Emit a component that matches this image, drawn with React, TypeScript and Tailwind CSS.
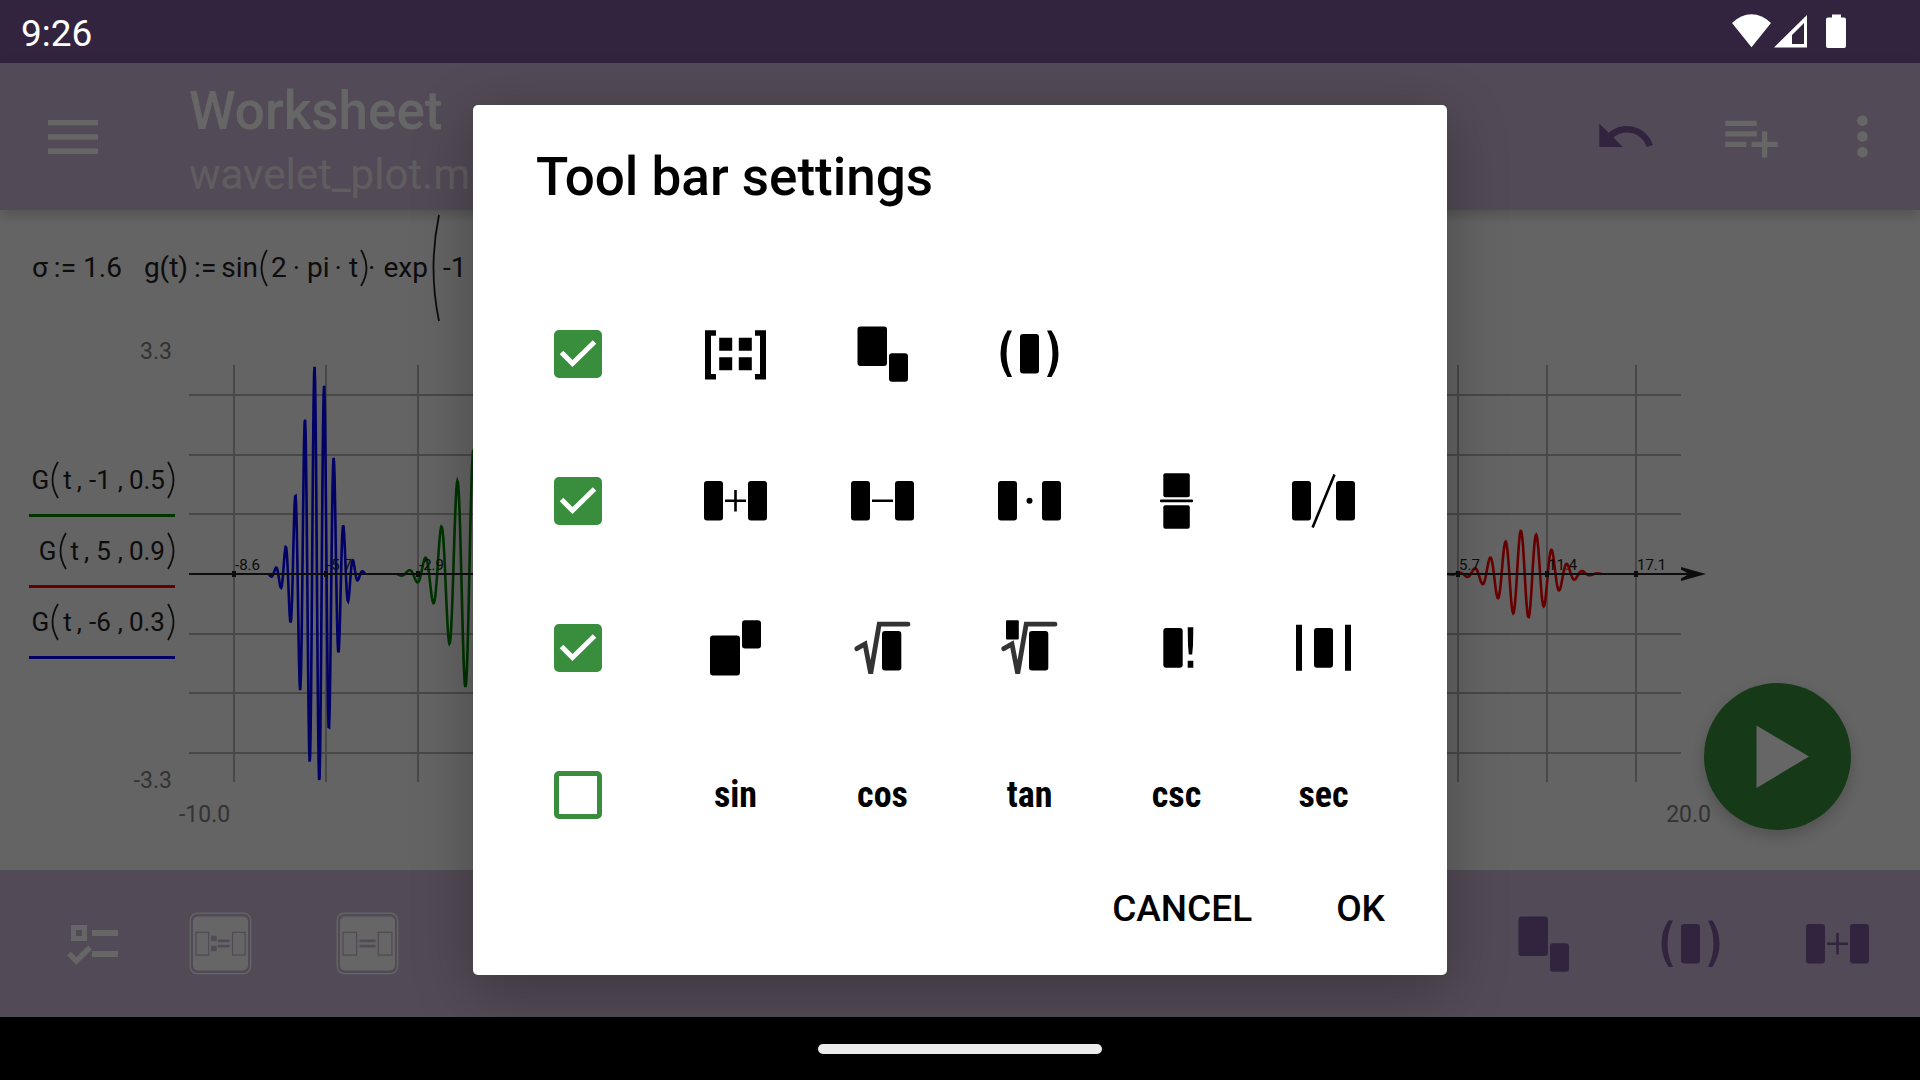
import { ReactNode, useState } from "react";

function Box({ x, y, w, h, r = 3 }: { x: number; y: number; w: number; h: number; r?: number }) {
  return <rect x={x} y={y} width={w} height={h} rx={r} />;
}

function Icon({ children }: { children: ReactNode }) {
  return (
    <svg className="size-[63px] shrink-0" viewBox="0 0 63 63" fill="currentColor" aria-hidden="true">
      {children}
    </svg>
  );
}

const Matrix = () => (
  <Icon>
    <path d="M1 8.2H12V13.7H7V52H12V57.5H1ZM62 8.2H51V13.7H56V52H51V57.5H62Z" />
    <path d="M15.2 15.8h13v13h-13zM34.8 15.8h13v13h-13zM15.2 35.2h13v13h-13zM34.8 35.2h13v13h-13z" />
  </Icon>
);

const Subscript = () => (
  <Icon>
    <Box x={6.5} y={4.5} w={29.5} h={39.5} />
    <Box x={38} y={31.3} w={19} h={28.4} />
  </Icon>
);

const Parens = () => (
  <Icon>
    <path d="M9.5 8.5H14Q8.5 19 8.5 31.7Q8.5 44 14 55H9.5Q2.5 44 2.5 31.7Q2.5 19 9.5 8.5Z" />
    <path d="M53.5 8.5H49Q54.5 19 54.5 31.7Q54.5 44 49 55H53.5Q60.5 44 60.5 31.7Q60.5 19 53.5 8.5Z" />
    <Box x={22} y={12} w={19} h={39.5} />
  </Icon>
);

const Pair = ({ children }: { children: ReactNode }) => (
  <Icon>
    <Box x={0} y={12} w={19} h={39.5} />
    <Box x={44} y={12} w={19} h={39.5} />
    {children}
  </Icon>
);

const Plus = () => (
  <Pair>
    <path d="M21 30.5h9.2v-9.5h2.6v9.5h9.2v2.5h-9.2v9.5h-2.6v-9.5h-9.2z" />
  </Pair>
);

const Minus = () => (
  <Pair>
    <path d="M21 30.5h21v2.5h-21z" />
  </Pair>
);

const Times = () => (
  <Pair>
    <circle cx="31.5" cy="31.7" r="3" />
  </Pair>
);

const Slash = () => (
  <Pair>
    <path d="M42.5 5.5L20.6 58.5" stroke="currentColor" strokeWidth="2.6" />
  </Pair>
);

const Fraction = () => (
  <Icon>
    <Box x={18.3} y={4.2} w={26.5} h={24} r={2} />
    <Box x={15} y={30.6} w={33} h={2.6} r={1} />
    <Box x={18.3} y={36.2} w={26.5} h={23.6} r={2} />
  </Icon>
);

const Power = () => (
  <Icon>
    <Box x={6} y={19.5} w={30} h={40} />
    <Box x={38} y={4.2} w={19} h={28.4} />
  </Icon>
);

const RootSign = () => (
  <>
    <path
      d="M5.8 32.7L14 28L19.7 57.5L28.2 8.2H57"
      fill="none"
      stroke="#333"
      strokeWidth="4.8"
      strokeLinecap="round"
    />
    <Box x={31} y={15} w={19.3} h={39.4} />
  </>
);

const Sqrt = () => (
  <Icon>
    <RootSign />
  </Icon>
);

const NthRoot = () => (
  <Icon>
    <RootSign />
    <Box x={8} y={4.2} w={12.8} h={19.4} r={1} />
  </Icon>
);

const Factorial = () => (
  <Icon>
    <Box x={18.3} y={12} w={19.4} h={39.8} />
    <path d="M42.7 11.2h5.6l-.3 18l-.8 9.3h-3.4l-.8-9.3zM42.7 44.8h5.6v7h-5.6z" />
  </Icon>
);

const Abs = () => (
  <Icon>
    <path d="M4 8.8h6v46H4zM53 8.8h6v46h-6z" />
    <Box x={22} y={12} w={19} h={39.8} />
  </Icon>
);

const Checklist = () => (
  <Icon>
    <path fillRule="evenodd" d="M10 13h16v16h-16zM15 18v6h6v-6z" />
    <path d="M31 18h26v6h-26zM31 39h26v6h-26z" />
    <path d="M8 41.5L15.2 49L29 35.5" fill="none" stroke="currentColor" strokeWidth="5.4" />
  </Icon>
);

const Assign = () => (
  <Icon>
    <rect x="1.2" y="1.2" width="60.4" height="60.4" rx="7" fill="none" stroke="currentColor" strokeWidth="1.3" />
    <rect x="4" y="4.5" width="55" height="54" rx="5" />
    <g className="fill-none stroke-[#cdb9d7]" strokeWidth="1.3">
      <rect x="7" y="20.3" width="12.6" height="22.8" />
      <rect x="43.5" y="20.3" width="12.6" height="22.8" />
    </g>
    <path
      className="fill-[#cdb9d7]"
      d="M22 23.7h5.7v5.6h-5.7zM22 33.7h5.7v5.6h-5.7zM28.8 27.6h11.8v2.7h-11.8zM28.8 32.7h11.8v2.7h-11.8z"
    />
  </Icon>
);

const Equation = () => (
  <Icon>
    <rect x="1.2" y="1.2" width="60.4" height="60.4" rx="7" fill="none" stroke="currentColor" strokeWidth="1.3" />
    <rect x="4" y="4.5" width="55" height="54" rx="5" />
    <g className="fill-none stroke-[#cdb9d7]" strokeWidth="1.3">
      <rect x="7" y="20.3" width="13.6" height="22.8" />
      <rect x="42.3" y="20.3" width="13.6" height="22.8" />
    </g>
    <path className="fill-[#cdb9d7]" d="M23.6 27.6h16v2.7h-16zM23.6 32.7h16v2.7h-16z" />
  </Icon>
);

function MaterialIcon({ d }: { d: string }) {
  return (
    <svg className="size-[63px]" viewBox="0 0 24 24" fill="currentColor" aria-hidden="true">
      <path d={d} />
    </svg>
  );
}

const UNDO =
  "M12.5 8c-2.65 0-5.05.99-6.9 2.6L2 7v9h9l-3.62-3.62c1.39-1.16 3.16-1.88 5.12-1.88 3.54 0 6.55 2.31 7.6 5.5l2.37-.78C21.08 11.03 17.15 8 12.5 8z";
const PLAYLIST_ADD = "M14 10H2v2h12v-2zm0-4H2v2h12V6zm4 8v-4h-2v4h-4v2h4v4h2v-4h4v-2h-4zM2 16h8v-2H2v2z";
const MORE =
  "M12 8c1.1 0 2-.9 2-2s-.9-2-2-2-2 .9-2 2 .9 2 2 2zm0 2c-1.1 0-2 .9-2 2s.9 2 2 2 2-.9 2-2-.9-2-2-2zm0 6c-1.1 0-2 .9-2 2s.9 2 2 2 2-.9 2-2-.9-2-2-2z";

function StatusBar() {
  return (
    <div className="flex h-[63px] shrink-0 items-center justify-between bg-[#32243f] pl-[21px] pr-[72px] text-white">
      <span className="mt-[4px] text-[37px] leading-[44px]">9:26</span>
      <svg className="h-[36px] w-[118px]" viewBox="0 0 118 36" fill="currentColor" aria-hidden="true">
        <path d="M2 9Q11 .3 21.500 .3Q32 .3 41 9L21.500 33.200Z" />
        <path fillRule="evenodd" d="M44 33.500L77 1V33.500ZM62 30H74V9L62 21Z" />
        <path d="M102 .5h9v3h3q2 0 2 2v26.500q0 2-2 2h-16q-2 0-2-2v-26.500q0-2 2-2h4z" />
      </svg>
    </div>
  );
}

function Header() {
  return (
    <header className="relative z-10 flex h-[147px] shrink-0 items-center bg-[#cdb9d7] pl-[20px] pr-[10px] text-white shadow-[0_4px_12px_rgba(0,0,0,0.2)]">
      <button aria-label="Open menu" className="flex h-[105px] w-[105px] items-center justify-center">
        <svg className="h-[34px] w-[50px]" viewBox="0 0 50 34" fill="currentColor" aria-hidden="true">
          <path d="M0 0h50v5.500H0zM0 14.200h50v5.500H0zM0 28.400h50v5.500H0z" />
        </svg>
      </button>
      <div className="ml-[64px] min-w-0 flex-1 pt-[12px]">
        <h1 className="text-[53px] font-medium leading-[64px]">Worksheet</h1>
        <p className="text-[42px] leading-[64px] text-white/70">wavelet_plot.mmt</p>
      </div>
      <button aria-label="Undo" className="flex h-[126px] w-[126px] items-center justify-center text-[#7d5a9d]">
        <MaterialIcon d={UNDO} />
      </button>
      <button aria-label="Add element" className="flex h-[126px] w-[126px] items-center justify-center">
        <MaterialIcon d={PLAYLIST_ADD} />
      </button>
      <button aria-label="More options" className="flex h-[126px] w-[96px] items-center justify-center">
        <MaterialIcon d={MORE} />
      </button>
    </header>
  );
}

// Tall parenthesis drawn with a thin stroke, as in typeset formulas.
function Paren({ size, close = false }: { size: "small" | "tall"; close?: boolean }) {
  const tall = size === "tall";
  const h = tall ? 108 : 38;
  const d = close ? `M1 1Q12 ${h / 2} 1 ${h - 1}` : `M7 1Q-4 ${h / 2} 7 ${h - 1}`;
  return (
    <svg
      className={tall ? "h-[108px] w-[8px] shrink-0" : "h-[38px] w-[8px] shrink-0"}
      viewBox={`0 0 8 ${h}`}
      fill="none"
      stroke="currentColor"
      strokeWidth="1.8"
      role="img"
      aria-label={close ? "close parenthesis" : "open parenthesis"}
    >
      <path d={d} />
    </svg>
  );
}

function Formula() {
  return (
    <div className="flex h-[108px] items-center whitespace-nowrap pl-[32px] pt-[2px] text-[28px] leading-[34px] text-[#212121]">
      <span>σ</span>
      <span className="ml-[6px]">:=</span>
      <span className="ml-[7px]">1.6</span>
      <span className="ml-[22px]">g(t)</span>
      <span className="ml-[6px]">:=</span>
      <span className="ml-[5px] mr-[2px]">sin</span>
      <Paren size="small" />
      <span className="ml-[3px]">2</span>
      <span className="ml-[6px]">·</span>
      <span className="ml-[7px]">pi</span>
      <span className="ml-[5px]">·</span>
      <span className="ml-[7px] mr-[2px]">t</span>
      <Paren size="small" close />
      <span>·</span>
      <span className="ml-[8px] mr-[4px]">exp</span>
      <Paren size="tall" />
      <span className="ml-[3px]">-1</span>
    </div>
  );
}

function Legend({ args, className }: { args: [string, string, string]; className: string }) {
  return (
    <div
      className={`flex h-[71px] items-center justify-end border-b-[3px] text-[26px] leading-[32px] text-[#212121] ${className}`}
    >
      <span className="mr-[2px]">G</span>
      <Paren size="small" />
      <span className="ml-[4px]">{args[0]}</span>
      <span className="ml-[5px]">,</span>
      <span className="ml-[7px]">{args[1]}</span>
      <span className="ml-[7px]">,</span>
      <span className="ml-[6px] mr-[2px]">{args[2]}</span>
      <Paren size="small" close />
    </div>
  );
}

// Samples a Gaussian-windowed sine around the centre, in chart pixels.
function wavelet(center: number, period: number, amplitude: number) {
  const points: string[] = [];
  for (let x = center - period * 5; x <= center + period * 5; x += 0.5) {
    const u = (x - center) / period;
    const y = 209 + amplitude * Math.sin(2 * Math.PI * u) * Math.exp((-u * u) / (2 * 1.6 * 1.6));
    points.push(`${x.toFixed(1)},${y.toFixed(1)}`);
  }
  return points.join(" ");
}

const rows = [30, 90, 149, 269, 328, 388];
const leftTicks = [
  { x: 45, label: "-8.6" },
  { x: 137, label: "-5.7" },
  { x: 229, label: "-2.9" },
];
const rightTicks = [
  { x: 1269, label: "5.7" },
  { x: 1358, label: "11.4" },
  { x: 1447, label: "17.1" },
];

function Chart() {
  const ticks = [...leftTicks, ...rightTicks];
  return (
    <svg className="h-auto w-full overflow-visible" viewBox="0 0 1516 417" role="img" aria-label="Wavelet plot">
      <g stroke="#b4b4b4" strokeWidth="2">
        {rows.map((y) => (
          <path key={y} d={`M0 ${y}H1492`} />
        ))}
        {ticks.map((t) => (
          <path key={t.x} d={`M${t.x} 0V417`} />
        ))}
      </g>
      <g fill="none" strokeWidth="2.6">
        <polyline stroke="#0000ff" points={wavelet(127.9, 9.66, 210)} />
        <polyline stroke="#008000" points={wavelet(288.4, 16.1, 126)} />
        <polyline stroke="#ff0000" points={wavelet(1335.7, 15.4, 43.8)} />
      </g>
      <g fill="#212121">
        <path d="M0 208H1500V210H0Z" />
        <path d="M1492 202L1517 209L1492 216V213.500L1500 209L1492 204.500Z" />
        {ticks.map((t) => (
          <g key={t.x}>
            <rect x={t.x - 2} y="206" width="4" height="6" />
            <text x={t.x + 1} y="205" fontSize="15">
              {t.label}
            </text>
          </g>
        ))}
      </g>
    </svg>
  );
}

function Worksheet() {
  return (
    <div className="relative min-h-0 flex-1 bg-[#fafafa] pt-[3px]">
      <Formula />
      <div className="flex pt-[16px]">
        <div className="flex w-[175px] shrink-0 flex-col justify-between pl-[29px]">
          <span className="pr-[3px] pt-[1px] text-right text-[23px] leading-[28px] text-[#808080]">3.3</span>
          <div className="pb-[29px]">
            <Legend args={["t", "-1", "0.5"]} className="border-[#008000]" />
            <Legend args={["t", "5", "0.9"]} className="border-[#ff0000]" />
            <Legend args={["t", "-6", "0.3"]} className="border-[#0000ff]" />
          </div>
          <span className="pr-[3px] text-right text-[23px] leading-[28px] text-[#808080]">-3.3</span>
        </div>
        <div className="ml-[14px] mr-[215px] flex-1 pb-[13px] pt-[28px]">
          <Chart />
        </div>
      </div>
      <div className="flex justify-between pl-[179px] pr-[209px] pt-[6px] text-[23px] leading-[28px] text-[#808080]">
        <span>-10.0</span>
        <span>20.0</span>
      </div>
      <button
        aria-label="Calculate"
        className="absolute bottom-[40px] right-[69px] size-[147px] rounded-full bg-[#388e3c] text-white shadow-[0_6px_16px_rgba(0,0,0,0.2)]"
      >
        <svg viewBox="0 0 147 147" fill="currentColor" aria-hidden="true">
          <path d="M52.500 42.500V105L105 73.500Z" />
        </svg>
      </button>
    </div>
  );
}

function ToolButton({ label, children }: { label: string; children: ReactNode }) {
  return (
    <button aria-label={label} className="flex h-[147px] w-[147px] shrink-0 items-center justify-center">
      {children}
    </button>
  );
}

function BottomBar() {
  return (
    <footer className="flex h-[147px] shrink-0 justify-between bg-[#cdb9d7]">
      <div className="flex text-white">
        <button aria-label="Tool bar settings" className="flex h-[147px] w-[147px] items-center justify-center pl-[38px]">
          <Checklist />
        </button>
        <ToolButton label="Assignment">
          <Assign />
        </ToolButton>
        <ToolButton label="Equation">
          <Equation />
        </ToolButton>
      </div>
      <div className="flex pr-[9px] text-[#7d5a9d]">
        <ToolButton label="Subscript">
          <Subscript />
        </ToolButton>
        <ToolButton label="Parentheses">
          <Parens />
        </ToolButton>
        <ToolButton label="Addition">
          <Plus />
        </ToolButton>
      </div>
    </footer>
  );
}

function Name({ children }: { children: ReactNode }) {
  return (
    <span className="font-['Liberation_Sans_Narrow','Roboto_Condensed',Roboto,sans-serif] text-[36px] font-bold leading-[40px]">
      {children}
    </span>
  );
}

const groups: { name: string; checked: boolean; tools: [string, ReactNode][] }[] = [
  {
    name: "Terms",
    checked: true,
    tools: [
      ["Matrix", <Matrix />],
      ["Subscript", <Subscript />],
      ["Parentheses", <Parens />],
    ],
  },
  {
    name: "Operators",
    checked: true,
    tools: [
      ["Addition", <Plus />],
      ["Subtraction", <Minus />],
      ["Multiplication", <Times />],
      ["Fraction", <Fraction />],
      ["Division", <Slash />],
    ],
  },
  {
    name: "Powers",
    checked: true,
    tools: [
      ["Power", <Power />],
      ["Square root", <Sqrt />],
      ["Nth root", <NthRoot />],
      ["Factorial", <Factorial />],
      ["Absolute value", <Abs />],
    ],
  },
  {
    name: "Trigonometry",
    checked: false,
    tools: ["sin", "cos", "tan", "csc", "sec"].map((n): [string, ReactNode] => [n, <Name>{n}</Name>]),
  },
];

function GroupRow({ name, checked, tools }: (typeof groups)[number]) {
  const [on, setOn] = useState(checked);
  return (
    <li className="flex h-[147px] items-center">
      <label className="relative mr-[42px] flex size-[84px] items-center justify-center">
        <input
          type="checkbox"
          aria-label={name}
          checked={on}
          onChange={(e) => setOn(e.target.checked)}
          className="size-[48px] appearance-none rounded-[5px] border-[5px] border-[#388e3c] bg-white checked:bg-[#388e3c]"
        />
        {on && (
          <svg className="pointer-events-none absolute size-[48px]" viewBox="0 0 48 48" fill="none" aria-hidden="true">
            <path d="M7.500 22.500L18.500 33.500L40.500 12" stroke="white" strokeWidth="5" />
          </svg>
        )}
      </label>
      {tools.map(([label, icon]) => (
        <ToolButton key={label} label={label}>
          {icon}
        </ToolButton>
      ))}
    </li>
  );
}

function SettingsDialog() {
  return (
    <div
      role="dialog"
      aria-modal="true"
      aria-labelledby="dialog-title"
      className="rounded-[5px] bg-white pb-[27px] pl-[63px] pr-[50px] pt-[40px] text-black shadow-[0_14px_60px_rgba(0,0,0,0.27)]"
    >
      <h2 id="dialog-title" className="mb-[71px] text-[53px] font-medium leading-[64px]">
        Tool bar settings
      </h2>
      <ul>
        {groups.map((g) => (
          <GroupRow key={g.name} {...g} />
        ))}
      </ul>
      <div className="mt-[2px] flex justify-end gap-[84px] pr-[12px] text-[37px] font-medium leading-[44px]">
        <button className="h-[78px]">CANCEL</button>
        <button className="h-[78px]">OK</button>
      </div>
    </div>
  );
}

export default function App() {
  return (
    <div className="flex h-screen flex-col overflow-hidden bg-black font-[Roboto,sans-serif]">
      <StatusBar />
      <main className="relative flex min-h-0 flex-1 flex-col">
        <Header />
        <Worksheet />
        <BottomBar />
        <div className="absolute inset-0 z-20 flex items-center justify-center overflow-hidden bg-black/60">
          <SettingsDialog />
        </div>
      </main>
      <div className="flex h-[63px] shrink-0 items-center justify-center bg-black">
        <div className="h-[10px] w-[284px] rounded-full bg-[#ececec]" />
      </div>
    </div>
  );
}
